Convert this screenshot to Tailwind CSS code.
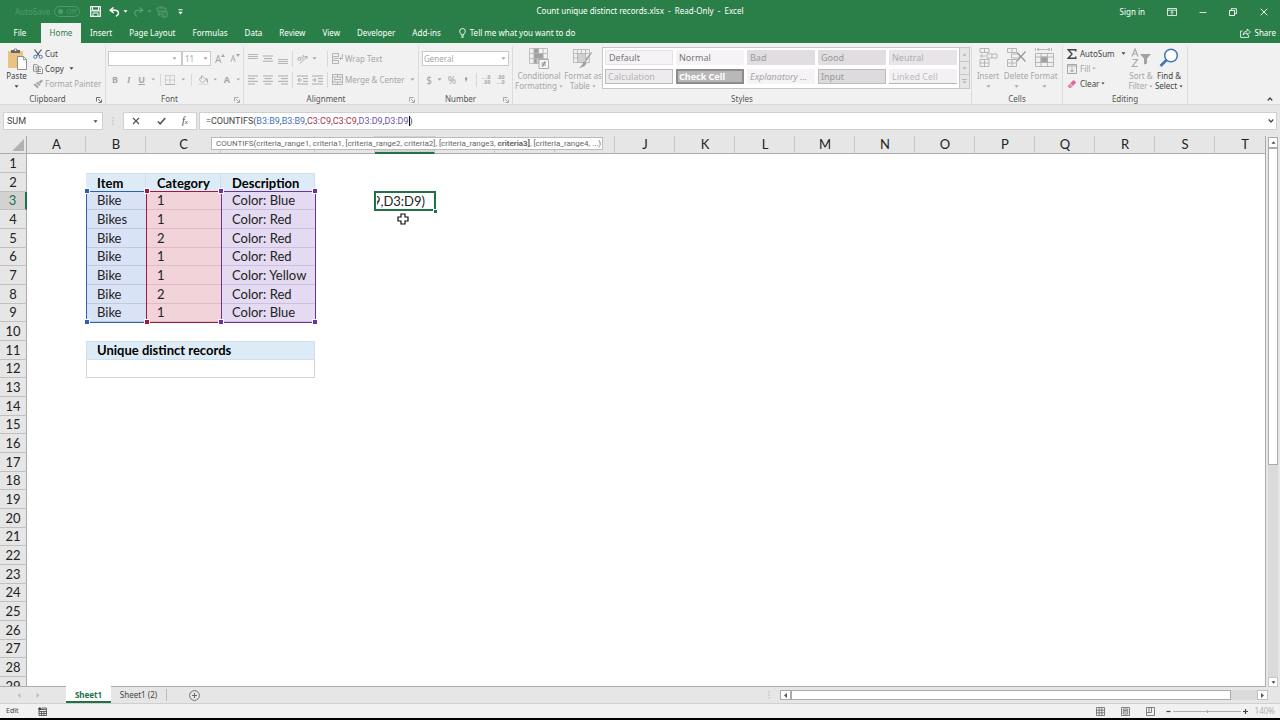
<!DOCTYPE html>
<html lang="en">
<head>
  <meta charset="UTF-8" />
  <meta name="viewport" content="width=device-width, initial-scale=1.0" />
  <title>Count unique distinct records.xlsx - Read-Only - Excel</title>
  <script src="https://cdn.jsdelivr.net/npm/@tailwindcss/browser@4"></script>
</head>
<body class="h-screen flex flex-col overflow-hidden bg-[#e6e6e6] text-[#444] text-[8px] leading-[10px] font-['Noto_Sans','Open_Sans',sans-serif]">

  <!-- Shared icons -->
  <svg class="hidden">
    <symbol id="down" viewBox="0 0 5 3"><path d="M0.5 0.3h4L2.5 2.7z" fill="currentColor"/></symbol>
    <symbol id="launcher" viewBox="0 0 6 6"><path d="M0.5 4.5V0.5h4M2 2l3 3M5.500 2.500v3h-3" fill="none" stroke="currentColor" stroke-width="0.800"/></symbol>
  </svg>

  <!-- Title bar -->
  <header class="bg-[#2a7f49] text-white shrink-0">
    <div class="relative h-[23px] flex items-center justify-between">
      <div class="flex items-center pl-[15px]">
        <label for="autosave" class="text-[#4f9a69]">AutoSave</label>
        <button id="autosave" class="ml-1 flex items-center gap-[3px] h-[11px] w-[26px] pl-[3px] rounded-full border border-[#4f9a69] text-[#4f9a69] text-[7px]"><span class="size-[5px] rounded-full bg-[#4f9a69]"></span>Off</button>
        <button class="ml-[10px]" aria-label="Save"><svg class="size-[11px]" viewBox="0 0 11 11"><path d="M0.7 0.700h9.600v9.600H0.700z" fill="none" stroke="#fff" stroke-width="1.200"/><path d="M2.500 0.700v3.500h6V0.700M3 10V7h5v3" fill="none" stroke="#fff" stroke-width="1"/><path d="M0.700 5h9.600" stroke="#fff" stroke-width="1"/></svg></button>
        <button class="ml-[8px]" aria-label="Undo"><svg class="w-[11px] h-[10px]" viewBox="0 0 11 10"><path d="M4.500 0.500L1.200 3.300l3.500 2.500M1.500 3.300h4.500q3.500 0.200 3.500 3 0 2-2.500 3" fill="none" stroke="#fff" stroke-width="1.500"/></svg></button>
        <svg class="ml-[3px] w-[5px] h-[3px]"><use href="#down"/></svg>
        <button class="ml-[5px]" aria-label="Redo"><svg class="w-[11px] h-[10px]" viewBox="0 0 11 10"><path d="M6.500 0.500l3.300 2.800-3.500 2.500M9.500 3.300H5Q1.500 3.500 1.500 6.300q0 2 2.500 3" fill="none" stroke="#559e6e" stroke-width="1.300"/></svg></button>
        <svg class="ml-[3px] w-[5px] h-[3px] text-[#559e6e]"><use href="#down"/></svg>
        <button class="ml-[4px]" aria-label="Paste options"><svg class="size-[12px]" viewBox="0 0 12 12" fill="none" stroke="#559e6e"><path d="M1 2h9v3H1zM3 5v5M1 8h4M6 6h5v5H6zM3 1h4M8 8v3"/></svg></button>
        <button class="ml-[10px]" aria-label="Customize toolbar"><svg class="w-[5px] h-[6px]" viewBox="0 0 5 6"><path d="M0.500 0.800h4" stroke="#fff"/><path d="M0.300 2.800h4.400L2.500 5.500z" fill="#fff"/></svg></button>
      </div>
      <h1 class="absolute left-1/2 -translate-x-1/2 -mt-px whitespace-pre">Count unique distinct records.xlsx  -  Read-Only  -  Excel</h1>
      <div class="flex items-center">
        <button class="mr-[22px]">Sign in</button>
        <button class="mr-[22px]" aria-label="Ribbon display options"><svg class="w-[10px] h-[8px]" viewBox="0 0 10 8" fill="none" stroke="#fff" stroke-width="0.800"><path d="M0.500 0.500h9v7h-9zM0.500 2.200h9M5 6.800V3.500M3.500 4.800L5 3.400l1.500 1.400"/></svg></button>
        <button class="mr-[22px]" aria-label="Minimize"><svg class="w-[8px] h-[8px]" viewBox="0 0 8 8"><path d="M0.500 4.500h7" stroke="#fff" stroke-width="0.800"/></svg></button>
        <button class="mr-[23px]" aria-label="Restore"><svg class="size-[8px]" viewBox="0 0 8 8" fill="none" stroke="#fff" stroke-width="0.900"><path d="M0.500 2.500h5v5h-5zM2.200 2.500V0.700h5.200v5H5.500"/></svg></button>
        <button class="mr-[12px]" aria-label="Close"><svg class="size-[8px]" viewBox="0 0 8 8"><path d="M0.700 0.700l6.600 6.600M7.300 0.700L0.700 7.300" stroke="#fff" stroke-width="0.900"/></svg></button>
      </div>
    </div>

    <!-- Ribbon tabs -->
    <nav class="h-[20px] flex items-center gap-px">
      <a href="#file" class="w-[40px] text-center">File</a>
      <a href="#home" class="w-[40px] h-full leading-[20px] bg-[#f1f1f1] text-[#2a7f49] text-center">Home</a>
      <a href="#insert" class="px-[8px]">Insert</a>
      <a href="#layout" class="px-[8px]">Page Layout</a>
      <a href="#formulas" class="px-[8px]">Formulas</a>
      <a href="#data" class="px-[8px]">Data</a>
      <a href="#review" class="px-[8px]">Review</a>
      <a href="#view" class="px-[8px]">View</a>
      <a href="#developer" class="px-[8px]">Developer</a>
      <a href="#addins" class="px-[8px]">Add-ins</a>
      <button class="pl-[9px] flex items-center gap-1">
        <svg class="w-[7px] h-[10px]" viewBox="0 0 7 10" fill="none" stroke="#fff" stroke-width="0.900"><path d="M2.300 7V6Q0.700 4.900 0.700 3.200a2.800 2.700 0 0 1 5.600 0Q6.300 4.900 4.700 6v1zM2.300 8.200h2.400M2.600 9.400h1.800"/></svg>
        Tell me what you want to do
      </button>
      <button class="ml-auto mr-1 flex items-center gap-1">
        <svg class="w-[11px] h-[10px]" viewBox="0 0 11 10" fill="none" stroke="#fff" stroke-width="0.800"><path d="M2.500 3H0.600v6.400h8V7M3 7q0.500-4 4.200-4V1l3.200 3-3.200 3V5Q4.500 5 3 7z"/></svg>
        Share
      </button>
    </nav>
  </header>

  <!-- Ribbon -->
  <section class="h-[62px] shrink-0 flex pt-[3px] bg-[#f1f1f1] border-b border-[#dadada] text-[#a6a6a6]">

    <div class="w-[106px] flex flex-col border-r border-[#dcdcdc]">
      <div class="h-[48px] flex">
        <button class="w-[33px] flex flex-col items-center pt-[2px] text-[#444]">
          <svg class="w-[20px] h-[22px]" viewBox="0 0 20 22"><path d="M1 3h15v17H1z" fill="#eac282"/><path d="M4 2h2.500q0.200-1.600 2-1.600T10.500 2H13v3H4z" fill="#666"/><circle cx="8.500" cy="2.200" r="0.900" fill="#fff"/><path d="M10.500 8.500h6l3 3v10h-9z" fill="#fff" stroke="#777" stroke-width="0.800"/><path d="M16.300 8.500v3.200h3.200" fill="none" stroke="#777" stroke-width="0.800"/></svg>
          <span class="mt-px">Paste</span>
          <svg class="mt-[4px] w-[5px] h-[3px]"><use href="#down"/></svg>
        </button>
        <div class="flex flex-col">
          <button class="h-[15px] flex items-center gap-[2px] text-[#444]">
            <svg class="w-[10px] h-[10px]" viewBox="0 0 10 10" fill="none"><path d="M1.500 0.500L6.500 7M8.500 0.500L3.500 7" stroke="#555" stroke-width="1.200"/><circle cx="2.300" cy="7.800" r="1.600" stroke="#3f74b5" stroke-width="0.900"/><circle cx="7.700" cy="7.800" r="1.600" stroke="#3f74b5" stroke-width="0.900"/></svg>Cut</button>
          <button class="h-[15px] flex items-center gap-[2px] text-[#444]">
            <svg class="w-[10px] h-[10px]" viewBox="0 0 10 10" fill="#fff" stroke="#777" stroke-width="0.800"><path d="M0.500 0.700h3.500l1.500 1.500v5h-5zM4 3h3.800l1.700 1.700v4.800H4z"/><path d="M1.500 3h2M1.500 5h2M5 5.500h3M5 7.500h3"/></svg>Copy
            <svg class="ml-[3px] w-[5px] h-[3px]"><use href="#down"/></svg></button>
          <button class="h-[15px] flex items-center gap-[2px] whitespace-nowrap">
            <svg class="w-[10px] h-[10px]" viewBox="0 0 10 10" fill="#a6a6a6"><path d="M8.500 0.500L10 2 7.300 4.700 5.500 3zM4.500 2.500l3.200 3.200-1.400 1.400L3 4zM2.500 4.500l3.200 3.200L4.500 9.500 0.300 5.500z"/></svg>Format Painter</button>
        </div>
      </div>
      <div class="relative text-center text-[#555] pr-[10px]">Clipboard<svg class="absolute right-[3px] top-[3px] size-[6px]"><use href="#launcher"/></svg></div>
    </div>

    <div class="w-[138px] flex flex-col border-r border-[#dcdcdc]">
      <div class="h-[48px] pt-[5px] px-[2px] flex flex-col gap-[6px]">
        <div class="h-[15px] flex items-center">
          <label class="w-[74px] h-full flex items-center pr-1 bg-white border border-[#c9c9c9]"><select aria-label="Font" class="flex-1 appearance-none"><option></option></select><svg class="w-[5px] h-[3px]"><use href="#down"/></svg></label>
          <label class="w-[29px] h-full flex items-center px-[2px] bg-white border border-[#c9c9c9]"><select aria-label="Font size" class="w-[18px] appearance-none"><option>11</option></select><svg class="w-[5px] h-[3px]"><use href="#down"/></svg></label>
          <button class="ml-[4px] flex items-start text-[10px]">A<svg class="w-[4px] h-[3px]" viewBox="0 0 4 3"><path d="M0 3l2-3 2 3z" fill="currentColor"/></svg></button>
          <button class="ml-[5px] flex items-start">A<svg class="w-[4px] h-[3px]" viewBox="0 0 4 3"><path d="M0 0h4L2 3z" fill="currentColor"/></svg></button>
        </div>
        <div class="h-[15px] flex items-center">
          <button class="w-[15px] font-bold text-[9px]">B</button>
          <button class="w-[15px] font-bold italic text-[9px] font-['Liberation_Serif',serif]">I</button>
          <button class="w-[13px] underline font-bold text-[9px]">U</button>
          <svg class="ml-[3px] w-[5px] h-[3px]"><use href="#down"/></svg>
          <span class="ml-[5px] w-px h-[12px] bg-[#d8d8d8]"></span>
          <button class="ml-[4px]" aria-label="Borders"><svg class="size-[10px]" viewBox="0 0 10 10" fill="none" stroke="#aaa" stroke-width="0.900"><path d="M0.500 0.500h9v9M0.500 0.500v9M5 0.500v9M0.500 5h9" stroke-dasharray="1 1"/><path d="M0 9.500h10"/></svg></button>
          <svg class="ml-[6px] w-[5px] h-[3px]"><use href="#down"/></svg>
          <span class="ml-[5px] w-px h-[12px] bg-[#d8d8d8]"></span>
          <button class="ml-[6px]" aria-label="Fill color"><svg class="w-[10px] h-[10px]" viewBox="0 0 10 10" fill="none" stroke="#aaa" stroke-width="0.900"><path d="M1 4.500L4.500 1.200 8 4.500 4.500 7.800zM3.500 0.300v4"/><path d="M8.300 3.500q1.700 2 0.900 4" stroke-width="1.300"/><path d="M0 9.300h10" stroke="#ddd" stroke-width="1.300"/></svg></button>
          <svg class="ml-[5px] w-[5px] h-[3px]"><use href="#down"/></svg>
          <button class="ml-[5px] w-[10px] font-bold text-[9px]">A</button>
          <svg class="ml-[5px] w-[5px] h-[3px]"><use href="#down"/></svg>
        </div>
      </div>
      <div class="relative text-center text-[#555] pr-[10px]">Font<svg class="absolute right-[3px] top-[3px] size-[6px] text-[#999]"><use href="#launcher"/></svg></div>
    </div>

    <div class="w-[175px] flex flex-col border-r border-[#dcdcdc]">
      <div class="h-[48px] pt-[5px] pl-[4px] flex flex-col gap-[6px]">
        <div class="h-[15px] flex items-center gap-[5px]">
          <button aria-label="Top align"><svg class="size-[10px]" viewBox="0 0 10 10"><path d="M0 0.500h10M0 2.500h10M0 4.500h10" stroke="#b5b5b5" stroke-width="1"/></svg></button>
          <button aria-label="Middle align"><svg class="size-[10px]" viewBox="0 0 10 10"><path d="M0 2h10M1 4.600h8M0 7.200h10" stroke="#aaa" stroke-width="1"/></svg></button>
          <button aria-label="Bottom align"><svg class="size-[10px]" viewBox="0 0 10 10"><path d="M0 5.500h10M0 7.500h10M0 9.500h10" stroke="#b5b5b5" stroke-width="1"/></svg></button>
          <span class="-ml-px w-px h-[16px] bg-[#d8d8d8]"></span>
          <button class="-ml-px flex items-center gap-[4px]" aria-label="Orientation"><svg class="w-[11px] h-[10px]" viewBox="0 0 11 10" fill="none" stroke="#aaa"><path d="M3 9.500L10 2.500M7.500 2.500H10V5"/><circle cx="2.500" cy="5" r="1.500"/><path d="M4 2.500l2.500 2.500M6 1l1 2.500"/></svg><svg class="w-[5px] h-[3px]"><use href="#down"/></svg></button>
          <button class="ml-[5px] h-[16px] border-l border-[#d8d8d8] pl-[4px] flex items-center gap-[2px] whitespace-nowrap"><svg class="w-[11px] h-[11px]" viewBox="0 0 11 11" fill="none" stroke="#aaa" stroke-width="0.900"><path d="M0.500 0.500h6v3h-6zM0.500 10.500h6v-3h-6zM0.500 3.500v4M1.500 5.500h5M10.300 1v4.500H8M9 4L7.500 5.500 9 7"/></svg>Wrap Text</button>
        </div>
        <div class="h-[15px] flex items-center gap-[5px]">
          <button aria-label="Align left"><svg class="size-[10px]" viewBox="0 0 10 10"><path d="M0 1h10M0 3.600h7M0 6.300h10M0 9h7" stroke="#aaa"/></svg></button>
          <button aria-label="Center"><svg class="size-[10px]" viewBox="0 0 10 10"><path d="M0 1h10M1.500 3.600h7M0 6.300h10M1.500 9h7" stroke="#aaa"/></svg></button>
          <button aria-label="Align right"><svg class="size-[10px]" viewBox="0 0 10 10"><path d="M0 1h10M3 3.600h7M0 6.300h10M3 9h7" stroke="#aaa"/></svg></button>
          <span class="-ml-px w-px h-[16px] bg-[#d8d8d8]"></span>
          <button class="-ml-px" aria-label="Decrease indent"><svg class="w-[11px] h-[10px]" viewBox="0 0 11 10" fill="none" stroke="#aaa"><path d="M0 1h11M6 3.600h5M6 6.300h5M0 9h11M5 5H1M2.800 3L0.800 5l2 2"/></svg></button>
          <button class="-ml-px" aria-label="Increase indent"><svg class="w-[11px] h-[10px]" viewBox="0 0 11 10" fill="none" stroke="#aaa"><path d="M0 1h11M6 3.600h5M6 6.300h5M0 9h11M0 5h4M2.200 3l2 2-2 2"/></svg></button>
          <button class="-ml-px h-[16px] border-l border-[#d8d8d8] pl-[4px] flex items-center gap-[2px] whitespace-nowrap"><svg class="w-[11px] h-[11px]" viewBox="0 0 11 11" fill="none" stroke="#aaa" stroke-width="0.900"><path d="M0.500 0.500h10v10h-10zM0.500 3h10M0.500 8h10M5.500 0.500V3M5.500 8v2.500M2 5.500h7M3.300 4.300L2 5.500l1.300 1.200M7.700 4.300L9 5.500 7.700 6.700"/></svg>Merge &amp; Center<svg class="ml-[3px] w-[5px] h-[3px]"><use href="#down"/></svg></button>
        </div>
      </div>
      <div class="relative text-center text-[#555] pr-[10px]">Alignment<svg class="absolute right-[3px] top-[3px] size-[6px] text-[#999]"><use href="#launcher"/></svg></div>
    </div>

    <div class="w-[94px] flex flex-col border-r border-[#dcdcdc]">
      <div class="h-[48px] pt-[5px] px-[3px] flex flex-col gap-[6px]">
        <label class="h-[15px] flex items-center pl-[1px] pr-[2px] bg-white border border-[#c9c9c9]"><select aria-label="Number format" class="flex-1 appearance-none"><option>General</option></select><svg class="w-[5px] h-[3px]"><use href="#down"/></svg></label>
        <div class="h-[15px] flex items-center">
          <button class="w-[14px] text-[10px]">$</button>
          <svg class="ml-[1px] w-[5px] h-[3px]"><use href="#down"/></svg>
          <button class="ml-[4px] w-[12px] text-[10px]">%</button>
          <button class="ml-[3px] w-[10px]" aria-label="Comma style"><svg class="mx-auto w-[4px] h-[6px]" viewBox="0 0 4 6"><path d="M1 0.500h2.200q0.600 3-2 4.800 0.900-1.500 0.500-2.600H1z" fill="#999"/></svg></button>
          <span class="ml-[5px] w-px h-[14px] bg-[#d8d8d8]"></span>
          <button class="ml-[4px] text-[5px] leading-[5px] text-right font-bold">←.0<br>.00</button>
          <button class="ml-[5px] text-[5px] leading-[5px] text-right font-bold">.00<br>→.0</button>
        </div>
      </div>
      <div class="relative text-center text-[#555] pr-[10px]">Number<svg class="absolute right-[3px] top-[3px] size-[6px] text-[#999]"><use href="#launcher"/></svg></div>
    </div>

    <div class="w-[459px] flex flex-col border-r border-[#dcdcdc]">
      <div class="h-[48px] flex">
        <button class="w-[52px] pt-[2px] flex flex-col items-center">
          <svg class="w-[20px] h-[21px]" viewBox="0 0 20 21" fill="none" stroke="#b5b5b5" stroke-width="0.800"><path d="M0.500 0.500h18v15h-18zM0.500 5.500h18M0.500 10.500h18M5 0.500v15M9.500 0.500v15M14 0.500v15"/><path d="M5 0.500h4.500v5H5zM5 5.500h9v5H5zM5 10.500h3v5H5z" fill="#a0a0a0"/><path d="M10 11.500h9.500v9H10z" fill="#f7f7f7" stroke="#999"/><path d="M12.500 15h4.500M12.500 17h4.500M16.300 13l-3 6" stroke="#777"/></svg>
          <span class="mt-[2px]">Conditional</span>
          <span class="flex items-center gap-[2px]">Formatting<svg class="w-[4px] h-[3px]"><use href="#down"/></svg></span>
        </button>
        <button class="w-[36px] pt-[2px] flex flex-col items-center">
          <svg class="w-[20px] h-[21px]" viewBox="0 0 20 21" fill="none" stroke="#b5b5b5" stroke-width="0.900"><path d="M0.500 1.500h16v13h-16zM0.500 5.500h16M0.500 10h16M4.500 1.500v13M8.500 1.500v13M12.500 1.500v13"/><path d="M4.500 5.500h8v9h-8z" fill="#d0d0d0"/><path d="M19.500 4.500l-6 9-2-1.500 6.500-8z" fill="#a0a0a0" stroke="#eee" stroke-width="0.500"/><path d="M11 13l2.500 2q-1 4-7.500 5 3.500-2.500 5-7z" fill="#a0a0a0" stroke="none"/></svg>
          <span class="mt-[2px] whitespace-nowrap">Format as</span>
          <span class="flex items-center gap-[2px]">Table<svg class="w-[4px] h-[3px]"><use href="#down"/></svg></span>
        </button>
        <!-- Cell styles gallery -->
        <div class="ml-px mt-px h-[42px] flex border border-[#c6c6c6] bg-white">
          <div class="p-[2px] grid grid-cols-5 content-start gap-x-[3px] gap-y-[4px] text-left text-[9px]">
            <button class="w-[68px] h-[15px] pl-[3px] text-left border border-[#e6e2e6] bg-[#f6f3f6] text-[#777]">Default</button>
            <button class="w-[68px] h-[15px] pl-[3px] text-left bg-[#f6f3f6] text-[#777]">Normal</button>
            <button class="w-[68px] h-[15px] pl-[3px] text-left bg-[#e1dde0] text-[#999]">Bad</button>
            <button class="w-[68px] h-[15px] pl-[3px] text-left bg-[#e1dde0] text-[#999]">Good</button>
            <button class="w-[68px] h-[15px] pl-[3px] text-left bg-[#e8e4e7] text-[#b0aeb0]">Neutral</button>
            <button class="w-[68px] h-[15px] pl-[2px] text-left border border-[#bbb] bg-[#eeebee] text-[#b5b3b5]">Calculation</button>
            <button class="w-[68px] h-[15px] pl-px text-left border-2 border-double border-[#8c8c8c] bg-[#b9b7b9] text-white font-bold">Check Cell</button>
            <button class="w-[68px] h-[15px] pl-[3px] text-left bg-[#f6f3f6] text-[#a5a3a5] italic whitespace-nowrap">Explanatory ...</button>
            <button class="w-[68px] h-[15px] pl-[2px] text-left border border-[#bbb] bg-[#dedbde] text-[#999]">Input</button>
            <button class="w-[68px] h-[15px] pl-[3px] pt-px text-left border-b border-[#b5b5b5] bg-[#f4f1f4] text-[#bdbbbd]">Linked Cell</button>
          </div>
          <div class="w-[10px] flex flex-col bg-[#e6e6e6] border-l border-[#c6c6c6] divide-y divide-[#c6c6c6] text-[#b5b5b5]">
            <button class="flex-1 flex items-center justify-center" aria-label="Scroll up"><svg class="w-[5px] h-[3px] rotate-180"><use href="#down"/></svg></button>
            <button class="flex-1 flex items-center justify-center" aria-label="Scroll down"><svg class="w-[5px] h-[3px]"><use href="#down"/></svg></button>
            <button class="flex-1 flex flex-col items-center justify-center gap-px" aria-label="More styles"><span class="w-[5px] h-px bg-[#b5b5b5]"></span><svg class="w-[5px] h-[3px]"><use href="#down"/></svg></button>
          </div>
        </div>
      </div>
      <div class="text-center text-[#555]">Styles</div>
    </div>

    <div class="w-[91px] flex flex-col border-r border-[#dcdcdc]">
      <div class="h-[48px] flex pl-[2px]">
        <button class="w-[28px] pt-[2px] flex flex-col items-center">
          <svg class="w-[19px] h-[20px]" viewBox="0 0 19 20" fill="none" stroke="#b0b0b0" stroke-width="0.900"><path d="M1 0.500h9v4H1zM5.500 0.500v4M1 11.500h9v7H1zM5.500 11.500v7M1 15h9M8 6h10v4H8zM13 6v4M6.500 8H1.500M3.500 6L1.300 8l2.200 2"/></svg>
          <span class="mt-[3px]">Insert</span><svg class="mt-[4px] w-[5px] h-[3px]"><use href="#down"/></svg></button>
        <button class="w-[28px] pt-[2px] flex flex-col items-center">
          <svg class="w-[19px] h-[20px]" viewBox="0 0 19 20" fill="none" stroke="#b0b0b0" stroke-width="0.900"><path d="M0.500 0.500h9v4h-9zM5 0.500v4M0.500 11.500h9v7h-9zM5 11.500v7M0.500 15h9M4.500 6h8v4h-8z"/><path d="M10 4.500l8.500 9M18.500 3.500L10 13" stroke="#999" stroke-width="1.300"/></svg>
          <span class="mt-[3px]">Delete</span><svg class="mt-[4px] w-[5px] h-[3px]"><use href="#down"/></svg></button>
        <button class="w-[28px] pt-[2px] flex flex-col items-center">
          <svg class="w-[19px] h-[20px]" viewBox="0 0 19 20" fill="none" stroke="#b0b0b0" stroke-width="0.900"><path d="M0.500 0v3M16.500 0v3M2 1.500h13M4 0L2 1.500 4 3M13 0l2 1.500L13 3M0.500 5.500h18v13h-18zM0.500 9h18M0.500 14.500h18M6 5.500v13M12.500 5.500v13"/><path d="M6 9h6.500v5.500H6z" fill="#a0a0a0"/></svg>
          <span class="mt-[3px]">Format</span><svg class="mt-[4px] w-[5px] h-[3px]"><use href="#down"/></svg></button>
      </div>
      <div class="text-center text-[#555]">Cells</div>
    </div>

    <div class="w-[125px] flex flex-col border-r border-[#dcdcdc]">
      <div class="h-[48px] flex">
        <div class="w-[64px] pl-1 flex flex-col">
          <button class="h-[15px] flex items-center gap-[3px] text-[#444]"><svg class="w-[10px] h-[10px]" viewBox="0 0 10 10"><path d="M8.800 2.500V0.800H1.200L5 5 1.200 9.200h7.600V7.500" fill="none" stroke="#444" stroke-width="1.400"/></svg>AutoSum<svg class="ml-[3px] w-[5px] h-[3px]"><use href="#down"/></svg></button>
          <button class="h-[15px] flex items-center gap-[3px]"><svg class="w-[10px] h-[10px]" viewBox="0 0 10 10" fill="none" stroke="#a6a6a6"><path d="M0.500 0.500h9v9h-9zM0.500 2h9M5 3.500V8M3 6l2 2 2-2"/></svg>Fill<svg class="-ml-px w-[4px] h-[3px]"><use href="#down"/></svg></button>
          <button class="h-[15px] flex items-center gap-[3px] text-[#444]"><svg class="w-[10px] h-[10px]" viewBox="0 0 10 10"><path d="M6.500 1L9.300 3.500 6 7 3.200 4.200z" fill="#e0699a"/><path d="M2.800 4.600l2.800 2.800L3.800 9H2.200L0.500 7.200z" fill="#d98db0"/></svg>Clear<svg class="-ml-px w-[4px] h-[3px]"><use href="#down"/></svg></button>
        </div>
        <button class="w-[28px] pt-[2px] flex flex-col items-center whitespace-nowrap">
          <svg class="w-[20px] h-[20px]" viewBox="0 0 20 20"><path d="M1 8.500L4 1l3 7.500M2 6h4M1.500 11.500h5L1.300 18.500h5.500" fill="none" stroke="#aaa" stroke-width="1.200"/><path d="M9 6h11l-4 4.500v5l-3 1v-6z" fill="#a0a0a0"/></svg>
          <span class="mt-[3px]">Sort &amp;</span>
          <span class="flex items-center gap-[2px]">Filter<svg class="w-[4px] h-[3px]"><use href="#down"/></svg></span>
        </button>
        <button class="w-[28px] pt-[2px] flex flex-col items-center whitespace-nowrap text-[#444]">
          <svg class="w-[20px] h-[20px]" viewBox="0 0 20 20"><circle cx="12" cy="7.500" r="6.300" fill="#fff" stroke="#3f74b5" stroke-width="1.500"/><path d="M7.500 12L1.500 18" stroke="#3f74b5" stroke-width="2.500"/></svg>
          <span class="mt-[3px]">Find &amp;</span>
          <span class="flex items-center gap-[2px]">Select<svg class="w-[4px] h-[3px]"><use href="#down"/></svg></span>
        </button>
      </div>
      <div class="text-center text-[#555]">Editing</div>
    </div>
    <button class="ml-auto mr-[7px] self-end mb-[3px]" aria-label="Collapse ribbon"><svg class="w-[6px] h-[4px]" viewBox="0 0 6 4"><path d="M0.700 3.500L3 1l2.300 2.500" fill="none" stroke="#444" stroke-width="1.200"/></svg></button>
  </section>

  <!-- Formula bar -->
  <section class="h-[31px] pt-[7px] pb-[6px] pl-[3px] pr-[3px] shrink-0 flex text-[9px] font-['Roboto','Open_Sans',sans-serif]">
    <div class="w-[100px] flex items-center pr-1 bg-white border border-[#d0d0d0]">
      <input id="namebox" aria-label="Name box" value="SUM" class="w-0 flex-1 pl-[3px] outline-none" />
      <svg class="w-[5px] h-[3px]"><use href="#down"/></svg>
    </div>
    <svg class="mx-[9px] self-center w-[2px] h-[8px]" viewBox="0 0 2 8"><path d="M1 0.500v1M1 3.500v1M1 6.500v1" stroke="#999"/></svg>
    <div class="w-[74px] flex items-center justify-around bg-white border border-[#d0d0d0]">
      <button aria-label="Cancel"><svg class="size-[8px]" viewBox="0 0 8 8"><path d="M1 1l6 6M7 1L1 7" stroke="#555" stroke-width="1.200"/></svg></button>
      <button aria-label="Enter"><svg class="w-[9px] h-[8px]" viewBox="0 0 9 8"><path d="M0.800 4.500l2.400 2.300L8.300 1" fill="none" stroke="#555" stroke-width="1.600"/></svg></button>
      <button aria-label="Insert function" class="italic font-['Liberation_Serif',serif] text-[10px]">f<span class="text-[7px]">x</span></button>
    </div>
    <div class="ml-[2px] flex-1 flex items-center justify-between pl-[6px] pr-[2px] bg-white border border-[#d0d0d0]">
      <div role="textbox" contenteditable="true" aria-label="Formula" spellcheck="false" class="flex outline-none">=COUNTIFS(<span class="text-[#3f6fc4]">B3:B9</span>,<span class="text-[#3f6fc4]">B3:B9</span>,<span class="text-[#a8324a]">C3:C9</span>,<span class="text-[#a8324a]">C3:C9</span>,<span class="text-[#7050a8]">D3:D9</span>,<span class="text-[#7050a8]">D3:D9</span><span class="border-l border-black">)</span></div>
      <button aria-label="Expand formula bar"><svg class="w-[6px] h-[4px]" viewBox="0 0 6 4"><path d="M0.700 0.500L3 3l2.300-2.500" fill="none" stroke="#444" stroke-width="1.200"/></svg></button>
    </div>
  </section>

  <!-- Worksheet -->
  <main class="relative flex-1 min-h-0 flex">
    <div class="relative flex-1 overflow-hidden border-r border-b border-[#ababab] bg-white text-[13px] leading-[17px] font-['Lato','Noto_Sans',sans-serif]">
      <div class="absolute inset-x-0 top-0 h-[18px] bg-[#e6e6e6] border-b border-[#ababab]"></div>
      <table class="relative table-fixed border-separate border-spacing-0 w-[1275px] text-[#222]">
        <colgroup id="cols"></colgroup>
        <thead><tr id="letters" class="h-[18px]"></tr></thead>
        <tbody id="rows"></tbody>
      </table>

      <!-- Coloured range outlines -->
      <div class="absolute left-[86px] top-[55px] w-[61px] h-[132px] border border-[#2f5fb0]"></div>
      <div class="absolute left-[146px] top-[55px] w-[76px] h-[132px] border border-[#a0183c]"></div>
      <div class="absolute left-[221px] top-[55px] w-[95px] h-[132px] border border-[#7030a0]"></div>
      <div id="handles"></div>

      <!-- Cell being edited -->
      <div class="absolute left-[374px] top-[55px] w-[62px] h-[20px] border-2 border-[#217346] bg-white text-[#222]">
        <div class="ml-px h-[16px] mr-[9px] flex justify-end overflow-hidden">D9,D3:D9)</div>
      </div>
      <span class="absolute left-[433px] top-[73px] size-[4px] bg-[#217346] border-l border-t border-white"></span>
      <svg class="absolute left-[397px] top-[77px] size-[12px]" viewBox="0 0 12 12"><path d="M4 1h4v3h3v4H8v3H4V8H1V4h3z" fill="#fff" stroke="#111" stroke-width="1.200"/></svg>
    </div>

    <!-- Argument tooltip -->
    <div class="absolute left-[211px] top-px h-[13px] w-[392px] pl-1 leading-[11px] whitespace-nowrap bg-white border border-[#bbb] text-[#666] font-['Roboto','Open_Sans',sans-serif]">COUNTIFS(criteria_range1, criteria1, [criteria_range2, criteria2], [criteria_range3, <b>criteria3]</b>, [criteria_range4, ...)</div>

    <!-- Vertical scrollbar -->
    <div class="w-[14px] pt-px px-[2px] flex flex-col">
      <button class="h-[11px] flex items-center justify-center bg-white border border-[#ababab]" aria-label="Scroll up"><svg class="w-[5px] h-[3px] rotate-180"><use href="#down"/></svg></button>
      <div class="flex-1 bg-[#dadada]"><div class="h-[60%] bg-white border border-[#ababab]"></div></div>
      <button class="h-[10px] flex items-center justify-center bg-white border border-[#c8c8c8]" aria-label="Scroll down"><svg class="w-[5px] h-[3px]"><use href="#down"/></svg></button>
    </div>
  </main>

  <!-- Sheet tabs -->
  <nav class="h-[17px] shrink-0 flex items-center pr-[12px] border-b border-[#d0d0d0]">
    <button class="ml-[17px]" aria-label="Previous sheet"><svg class="w-[4px] h-[5px]" viewBox="0 0 4 5"><path d="M3.500 0v5L0.500 2.500z" fill="#bbb"/></svg></button>
    <button class="ml-[15px]" aria-label="Next sheet"><svg class="w-[4px] h-[5px]" viewBox="0 0 4 5"><path d="M0.500 0v5l3-2.500z" fill="#bbb"/></svg></button>
    <a href="#sheet1" class="ml-[26px] w-[45px] h-[17px] self-start -mt-px leading-[17px] text-center font-bold text-[#217346] bg-white border-b-2 border-[#217346] relative">Sheet1</a>
    <a href="#sheet2" class="w-[56px] text-center border-r border-[#bbb] leading-[12px]">Sheet1 (2)</a>
    <button class="ml-[22px]" aria-label="New sheet"><svg class="size-[11px]" viewBox="0 0 11 11" fill="none" stroke="#666"><circle cx="5.500" cy="5.500" r="4.900" stroke-width="0.900"/><path d="M5.500 3v5M3 5.500h5"/></svg></button>
    <svg class="ml-auto mr-[10px] w-[2px] h-[8px]" viewBox="0 0 2 8"><path d="M1 0.500v1M1 3.500v1M1 6.500v1" stroke="#999"/></svg>
    <div class="w-5/13 h-[10px] flex bg-[#dadada]">
      <button class="w-[11px] flex items-center justify-center bg-white border border-[#ababab]" aria-label="Scroll left"><svg class="w-[3px] h-[5px]" viewBox="0 0 3 5"><path d="M3 0v5L0 2.500z" fill="#555"/></svg></button>
      <div class="flex-1 mr-[26px] bg-white border border-[#ababab]"></div>
      <button class="w-[11px] flex items-center justify-center bg-white border border-[#c0c0c0]" aria-label="Scroll right"><svg class="w-[3px] h-[5px]" viewBox="0 0 3 5"><path d="M0 0v5l3-2.500z" fill="#555"/></svg></button>
    </div>
  </nav>

  <!-- Status bar -->
  <footer class="h-[16px] shrink-0 flex items-center pl-[6px] pr-[5px] bg-[#f1f1f1] border-b-2 border-black">
    <span class="text-[7px]">Edit</span>
    <button class="ml-[19px]" aria-label="Record macro"><svg class="w-[9px] h-[9px]" viewBox="0 0 9 9" fill="none" stroke="#555" stroke-width="0.900"><path d="M1 2.500h7.500v6H1zM1 4.500h7.500M3.500 4.500v4M6 4.500v4M1 6.500h7.500M4 2.500V1h4.500v1.500"/><circle cx="1.700" cy="1.700" r="1.500" fill="#444" stroke="none"/></svg></button>
    <button class="ml-auto" aria-label="Normal view"><svg class="size-[9px]" viewBox="0 0 9 9" fill="none" stroke="#666" stroke-width="0.800"><path d="M0.500 0.500h8v8h-8zM0.500 3.200h8M0.500 5.800h8M3.200 0.500v8M5.800 0.500v8"/></svg></button>
    <button class="ml-[16px]" aria-label="Page layout view"><svg class="size-[9px]" viewBox="0 0 9 9" fill="none" stroke="#666" stroke-width="0.800"><path d="M0.500 0.500h8v8h-8zM2.300 2h4.400v5H2.300zM3 3.500h3M3 5h3"/></svg></button>
    <button class="ml-[16px]" aria-label="Page break view"><svg class="size-[9px]" viewBox="0 0 9 9" fill="none" stroke="#666" stroke-width="0.800"><path d="M0.500 0.500h8v8h-8zM0.500 5.500h5v-5M3 0.500v5"/></svg></button>
    <button class="ml-[11px]" aria-label="Zoom out"><svg class="size-[5px]" viewBox="0 0 5 5"><path d="M0.500 2.500h4" stroke="#444" stroke-width="1.200"/></svg></button>
    <div class="ml-[2px] relative w-[68px] h-[5px] flex items-center">
      <span class="w-full h-px bg-[#b0b0b0]"></span>
      <span class="absolute left-1/2 w-px h-[3px] bg-[#aaa]"></span>
      <input type="range" aria-label="Zoom" min="10" max="400" value="140" class="absolute inset-0 w-full opacity-0" />
    </div>
    <button class="ml-[2px]" aria-label="Zoom in"><svg class="size-[5px]" viewBox="0 0 5 5"><path d="M0 2.500h5M2.500 0v5" stroke="#444" stroke-width="1.200"/></svg></button>
    <span class="ml-[7px] text-[#b0b0b0]">140%</span>
  </footer>

  <script>
    // D to I sit behind the argument tooltip
    const letters = ['A', 'B', 'C', '', '', '', '', '', '', 'J', 'K', 'L', 'M', 'N', 'O', 'P', 'Q', 'R', 'S', 'T'];
    const widths = [59, 60, 75, 94];
    const records = {
      3: ['Bike', '1', 'Color: Blue'],
      4: ['Bikes', '1', 'Color: Red'],
      5: ['Bike', '2', 'Color: Red'],
      6: ['Bike', '1', 'Color: Red'],
      7: ['Bike', '1', 'Color: Yellow'],
      8: ['Bike', '2', 'Color: Red'],
      9: ['Bike', '1', 'Color: Blue']
    };

    // Column widths and letters
    document.getElementById('cols').innerHTML = '<col style="width:27px">' +
      letters.map((l, i) => `<col style="width:${widths[i] || 60}px">`).join('');
    document.getElementById('letters').innerHTML =
      '<th class="p-0 border-r border-b border-[#ababab]"><svg class="ml-auto mr-[2px] size-[12px]" viewBox="0 0 12 12"><path d="M12 0v12H0z" fill="#b2b2b2"/></svg></th>' +
      letters.map((l, i) => i === 5
        ? '<th class="p-0 bg-[#d2d2d2] border-r border-b-2 border-r-[#c8c8c8] border-b-[#217346]"></th>'
        : `<th class="p-0 pl-px font-normal border-r border-b border-r-[#c8c8c8] border-b-[#ababab]">${l}</th>`).join('');

    // One row of cells; every third row is a pixel shorter
    function cells(n) {
      if (n === 2) {
        return '<td></td>' + ['Item', 'Category', 'Description'].map(t =>
          `<th class="p-0 pl-[11px] text-left text-black bg-[#ddebf7] border-r border-t border-[#d0dfee]">${t}</th>`).join('');
      }
      if (records[n]) {
        const [item, category, description] = records[n];
        return '<td></td>' +
          `<td class="p-0 pl-[11px] bg-[#d9e3f5] border-b border-[#bccbe2]">${item}</td>` +
          `<td class="p-0 pl-[11px] bg-[#f3d3da] border-b border-[#dcbcc6]">${category}</td>` +
          `<td class="p-0 pl-[11px] whitespace-nowrap bg-[#e4daf1] border-b border-[#cbbfde]">${description}</td>`;
      }
      if (n === 11) return '<td></td><th colspan="3" class="p-0 pl-[10px] text-left text-black bg-[#ddebf7] border border-[#d0dfee]">Unique distinct records</th>';
      if (n === 12) return '<td></td><td colspan="3" class="p-0 border-x border-b border-[#d4d4d4]"></td>';
      return '';
    }

    let html = '';
    for (let n = 1; n <= 29; n++) {
      const head = n === 3
        ? 'p-0 font-normal bg-[#d2d2d2] text-[#217346] border-b border-r-2 border-b-[#c0c0c0] border-r-[#217346]'
        : 'p-0 font-normal bg-[#e6e6e6] border-b border-r border-b-[#c0c0c0] border-r-[#ababab]';
      html += `<tr class="${n % 3 === 0 ? 'h-[18px]' : 'h-[19px]'}"><th class="${head}">${n}</th>${cells(n)}</tr>`;
    }
    document.getElementById('rows').innerHTML = html;

    // Square drag handles on the range corners
    const xs = [[85, '#2f5fb0'], [145, '#a0183c'], [219, '#7030a0'], [313, '#7030a0']];
    document.getElementById('handles').innerHTML = xs.flatMap(([x, c]) => [53, 184].map(y =>
      `<span class="absolute size-[4px] outline outline-white" style="left:${x}px;top:${y}px;background:${c}"></span>`)).join('');
  </script>
</body>
</html>
